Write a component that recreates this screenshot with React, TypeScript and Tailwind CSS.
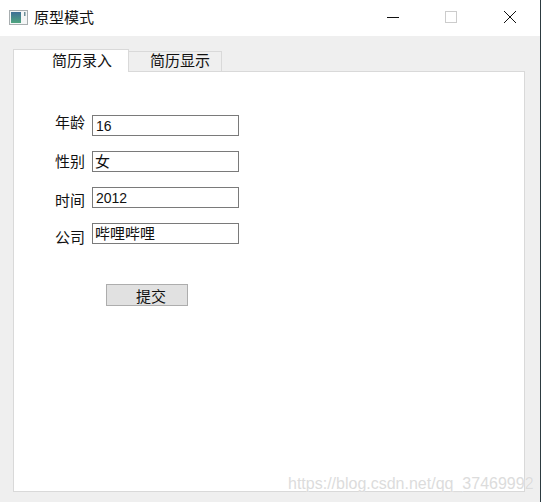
const cjk = "font-['Noto_Sans_CJK_SC','Liberation_Sans',sans-serif]";

function Row({ label, value, latin, shift }: { label: string; value: string; latin?: boolean; shift: string }) {
  return (
    <div className="flex h-[21px] items-center">
      <span className={`w-[30px] text-[15px] leading-[21px] text-[#111] ${shift}`}>{label}</span>
      <div
        className={`ml-[7px] flex h-[21px] w-[147px] items-center border border-[#7a7a7a] bg-white text-[#111] ${
          latin ? "pl-[3px] pt-[2px] font-['Liberation_Sans',sans-serif] text-[14px]" : "pl-[2px] text-[15px]"
        }`}
      >
        {value}
      </div>
    </div>
  );
}

export default function App() {
  return (
    <div className={`relative flex h-[502px] w-[541px] flex-col overflow-hidden border-r border-[#2c3a40] bg-[#efefef] ${cjk}`}>
      {/* title bar */}
      <div className="flex h-[36px] items-center bg-white pb-[2px]">
        <svg className="ml-[9px] h-[15px] w-[19px]" viewBox="0 0 19 15">
          <rect x="0.5" y="0.5" width="18" height="14" fill="#f4f6f6" stroke="#a8aeb0" />
          <defs>
            <linearGradient id="ico" x1="0" y1="0" x2="0" y2="1">
              <stop offset="0" stopColor="#3f6f96" />
              <stop offset="1" stopColor="#4fa57f" />
            </linearGradient>
          </defs>
          <rect x="2" y="2" width="10" height="11" fill="url(#ico)" />
          <rect x="15" y="2" width="1.5" height="4" fill="#6f8f98" />
        </svg>
        <span className="ml-[6px] -mt-px text-[15px] leading-none text-[#111]">原型模式</span>
        <div className="ml-auto flex items-center">
          <svg className="h-[14px] w-[14px]" viewBox="0 0 14 14">
            <path d="M1 7.5H13" stroke="#111" strokeWidth="1" />
          </svg>
          <svg className="ml-[44px] h-[14px] w-[14px]" viewBox="0 0 14 14">
            <rect x="1.5" y="1.5" width="11" height="11" fill="none" stroke="#cccccc" />
          </svg>
          <svg className="ml-[45px] mr-[23px] h-[14px] w-[14px]" viewBox="0 0 14 14">
            <path d="M1 1L13 13M13 1L1 13" stroke="#111" strokeWidth="1" />
          </svg>
        </div>
      </div>

      {/* tabs */}
      <div className="ml-[13px] mt-[12px] flex h-[23px] items-end">
        <div className="relative z-10 -mb-px h-[23px] w-[116px] whitespace-nowrap border border-b-0 border-[#d9d9d9] bg-white pl-[38px] text-[15px] leading-[20px] text-[#111]">
          简历录入
        </div>
        <div className="h-[20px] w-[93px] whitespace-nowrap border border-b-0 border-l-0 border-[#d9d9d9] bg-[#efefef] pl-[21px] text-[15px] leading-[16px] text-[#111]">
          简历显示
        </div>
      </div>

      {/* pane */}
      <div className="ml-[13px] flex h-[421px] w-[512px] flex-col border border-[#d9d9d9] bg-white pl-[41px] pt-[43px]">
        <div className="flex flex-col gap-[15px]">
          <Row label="年龄" value="16" latin shift="-translate-y-[4px]" />
          <Row label="性别" value="女" shift="-translate-y-[1px]" />
          <Row label="时间" value="2012" latin shift="translate-y-[2px]" />
          <Row label="公司" value="哔哩哔哩" shift="translate-y-[3px]" />
        </div>
        <button className="ml-[51px] mt-[40px] h-[22px] w-[82px] border border-[#adadad] bg-[#e1e1e1] pl-[8px] text-[15px] leading-none text-[#111]">
          提交
        </button>
      </div>

      {/* csdn watermark */}
      <span className="absolute left-[288px] top-[473px] whitespace-nowrap font-['Liberation_Sans',sans-serif] text-[16px] leading-[22px] text-[#dcdcdc] [text-shadow:0_0_1px_#ffffff]">
        https://blog.csdn.net/qq_37469992
      </span>
    </div>
  );
}
